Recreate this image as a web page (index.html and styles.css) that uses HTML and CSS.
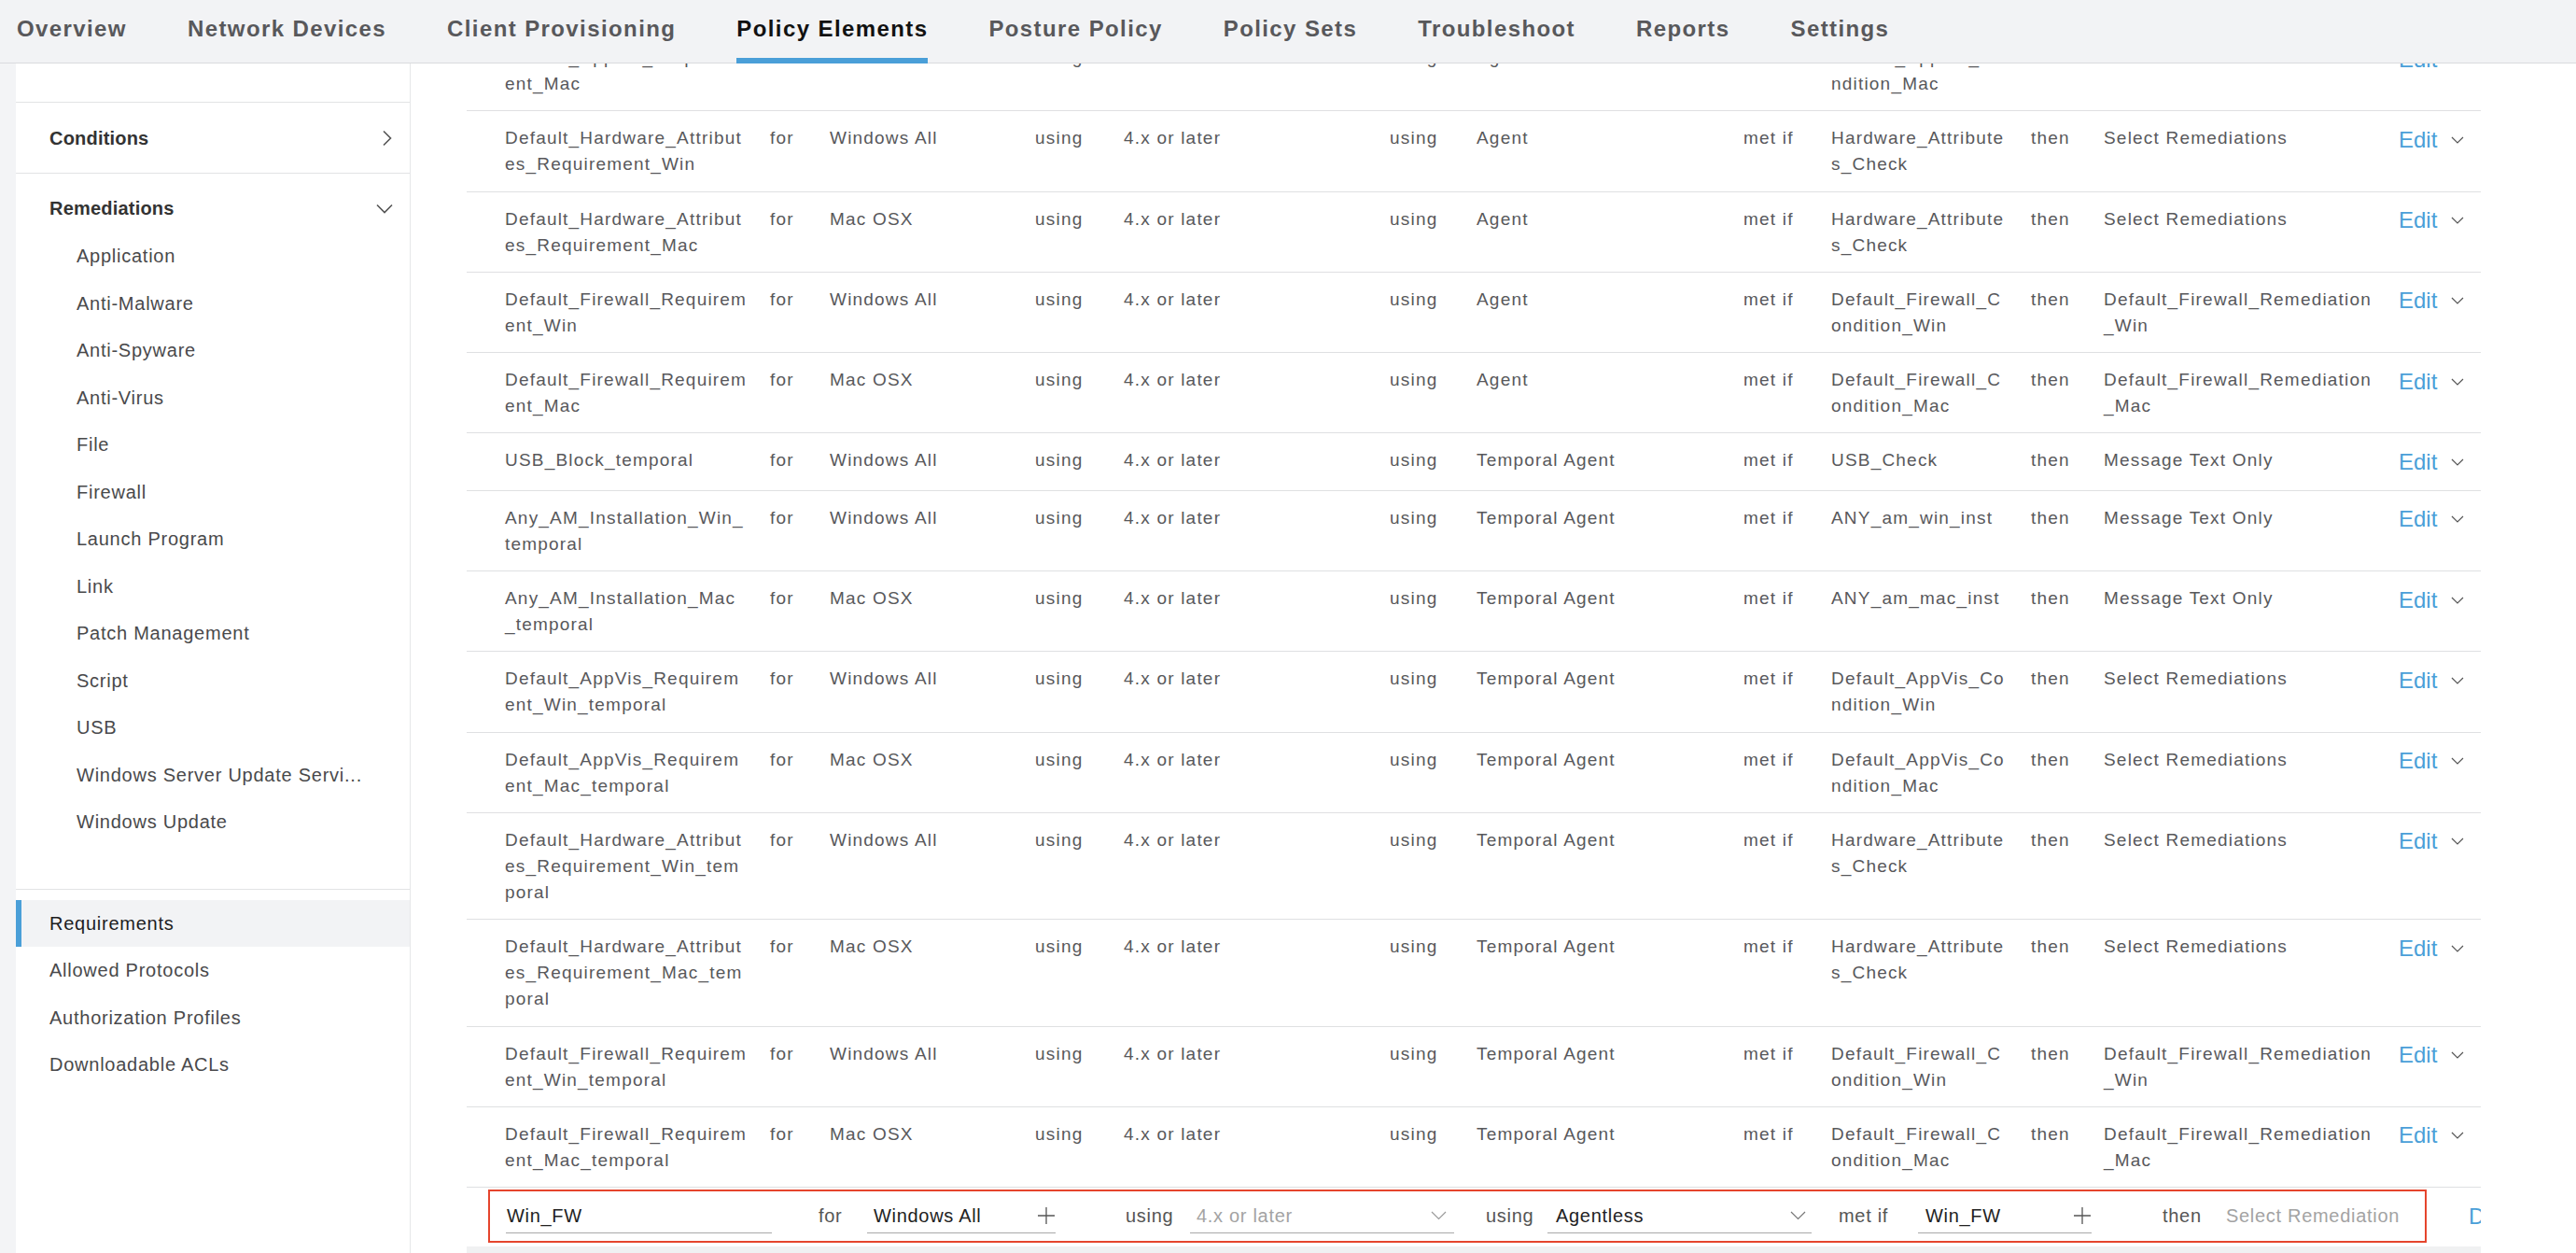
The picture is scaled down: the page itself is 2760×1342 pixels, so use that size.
FILE: index.html
```html
<!DOCTYPE html>
<html lang="en">
<head>
<meta charset="utf-8">
<title>Policy Elements - Requirements</title>
<link rel="stylesheet" href="styles.css">
</head>
<body>
<nav class="topnav">
  <a class="nav-item">Overview</a>
  <a class="nav-item">Network Devices</a>
  <a class="nav-item">Client Provisioning</a>
  <a class="nav-item active">Policy Elements</a>
  <a class="nav-item">Posture Policy</a>
  <a class="nav-item">Policy Sets</a>
  <a class="nav-item">Troubleshoot</a>
  <a class="nav-item">Reports</a>
  <a class="nav-item">Settings</a>
</nav>
<div class="layout">
  <aside class="sidebar">
    <div class="side-top"></div>
    <div class="side-section cond">
      <div class="side-head"><span>Conditions</span>
        <svg class="chev-right" width="12" height="18" viewBox="0 0 12 18"><path d="M2 1.5 L9.5 9 L2 16.5" fill="none" stroke="#555" stroke-width="1.6"/></svg>
      </div>
    </div>
    <div class="side-section rem">
      <div class="side-head"><span>Remediations</span>
        <svg class="chev-down" width="18" height="11" viewBox="0 0 18 11"><path d="M1 1.5 L9 9.5 L17 1.5" fill="none" stroke="#555" stroke-width="1.6"/></svg>
      </div>
      <ul class="side-sub">
        <li>Application</li>
        <li>Anti-Malware</li>
        <li>Anti-Spyware</li>
        <li>Anti-Virus</li>
        <li>File</li>
        <li>Firewall</li>
        <li>Launch Program</li>
        <li>Link</li>
        <li>Patch Management</li>
        <li>Script</li>
        <li>USB</li>
        <li>Windows Server Update Servi...</li>
        <li>Windows Update</li>
      </ul>
    </div>
    <ul class="side-main">
      <li class="active">Requirements</li>
      <li>Allowed Protocols</li>
      <li>Authorization Profiles</li>
      <li>Downloadable ACLs</li>
    </ul>
  </aside>
  <main class="content">
    <div class="table">
      <div class="row"><div>Default_AppVis_Requirem<br>ent_Mac</div><div>for</div><div>Mac OSX</div><div>using</div><div>4.x or later</div><div>using</div><div>Agent</div><div>met if</div><div>Default_AppVis_Co<br>ndition_Mac</div><div>then</div><div>Select Remediations</div><div class="edit"><span>Edit</span><svg width="14" height="8" viewBox="0 0 14 8"><path d="M1 1 L7 7 L13 1" fill="none" stroke="#555" stroke-width="1.2"/></svg></div></div>
      <div class="row"><div>Default_Hardware_Attribut<br>es_Requirement_Win</div><div>for</div><div>Windows All</div><div>using</div><div>4.x or later</div><div>using</div><div>Agent</div><div>met if</div><div>Hardware_Attribute<br>s_Check</div><div>then</div><div>Select Remediations</div><div class="edit"><span>Edit</span><svg width="14" height="8" viewBox="0 0 14 8"><path d="M1 1 L7 7 L13 1" fill="none" stroke="#555" stroke-width="1.2"/></svg></div></div>
      <div class="row"><div>Default_Hardware_Attribut<br>es_Requirement_Mac</div><div>for</div><div>Mac OSX</div><div>using</div><div>4.x or later</div><div>using</div><div>Agent</div><div>met if</div><div>Hardware_Attribute<br>s_Check</div><div>then</div><div>Select Remediations</div><div class="edit"><span>Edit</span><svg width="14" height="8" viewBox="0 0 14 8"><path d="M1 1 L7 7 L13 1" fill="none" stroke="#555" stroke-width="1.2"/></svg></div></div>
      <div class="row"><div>Default_Firewall_Requirem<br>ent_Win</div><div>for</div><div>Windows All</div><div>using</div><div>4.x or later</div><div>using</div><div>Agent</div><div>met if</div><div>Default_Firewall_C<br>ondition_Win</div><div>then</div><div>Default_Firewall_Remediation<br>_Win</div><div class="edit"><span>Edit</span><svg width="14" height="8" viewBox="0 0 14 8"><path d="M1 1 L7 7 L13 1" fill="none" stroke="#555" stroke-width="1.2"/></svg></div></div>
      <div class="row"><div>Default_Firewall_Requirem<br>ent_Mac</div><div>for</div><div>Mac OSX</div><div>using</div><div>4.x or later</div><div>using</div><div>Agent</div><div>met if</div><div>Default_Firewall_C<br>ondition_Mac</div><div>then</div><div>Default_Firewall_Remediation<br>_Mac</div><div class="edit"><span>Edit</span><svg width="14" height="8" viewBox="0 0 14 8"><path d="M1 1 L7 7 L13 1" fill="none" stroke="#555" stroke-width="1.2"/></svg></div></div>
      <div class="row"><div>USB_Block_temporal</div><div>for</div><div>Windows All</div><div>using</div><div>4.x or later</div><div>using</div><div>Temporal Agent</div><div>met if</div><div>USB_Check</div><div>then</div><div>Message Text Only</div><div class="edit"><span>Edit</span><svg width="14" height="8" viewBox="0 0 14 8"><path d="M1 1 L7 7 L13 1" fill="none" stroke="#555" stroke-width="1.2"/></svg></div></div>
      <div class="row"><div>Any_AM_Installation_Win_<br>temporal</div><div>for</div><div>Windows All</div><div>using</div><div>4.x or later</div><div>using</div><div>Temporal Agent</div><div>met if</div><div>ANY_am_win_inst</div><div>then</div><div>Message Text Only</div><div class="edit"><span>Edit</span><svg width="14" height="8" viewBox="0 0 14 8"><path d="M1 1 L7 7 L13 1" fill="none" stroke="#555" stroke-width="1.2"/></svg></div></div>
      <div class="row"><div>Any_AM_Installation_Mac<br>_temporal</div><div>for</div><div>Mac OSX</div><div>using</div><div>4.x or later</div><div>using</div><div>Temporal Agent</div><div>met if</div><div>ANY_am_mac_inst</div><div>then</div><div>Message Text Only</div><div class="edit"><span>Edit</span><svg width="14" height="8" viewBox="0 0 14 8"><path d="M1 1 L7 7 L13 1" fill="none" stroke="#555" stroke-width="1.2"/></svg></div></div>
      <div class="row"><div>Default_AppVis_Requirem<br>ent_Win_temporal</div><div>for</div><div>Windows All</div><div>using</div><div>4.x or later</div><div>using</div><div>Temporal Agent</div><div>met if</div><div>Default_AppVis_Co<br>ndition_Win</div><div>then</div><div>Select Remediations</div><div class="edit"><span>Edit</span><svg width="14" height="8" viewBox="0 0 14 8"><path d="M1 1 L7 7 L13 1" fill="none" stroke="#555" stroke-width="1.2"/></svg></div></div>
      <div class="row"><div>Default_AppVis_Requirem<br>ent_Mac_temporal</div><div>for</div><div>Mac OSX</div><div>using</div><div>4.x or later</div><div>using</div><div>Temporal Agent</div><div>met if</div><div>Default_AppVis_Co<br>ndition_Mac</div><div>then</div><div>Select Remediations</div><div class="edit"><span>Edit</span><svg width="14" height="8" viewBox="0 0 14 8"><path d="M1 1 L7 7 L13 1" fill="none" stroke="#555" stroke-width="1.2"/></svg></div></div>
      <div class="row"><div>Default_Hardware_Attribut<br>es_Requirement_Win_tem<br>poral</div><div>for</div><div>Windows All</div><div>using</div><div>4.x or later</div><div>using</div><div>Temporal Agent</div><div>met if</div><div>Hardware_Attribute<br>s_Check</div><div>then</div><div>Select Remediations</div><div class="edit"><span>Edit</span><svg width="14" height="8" viewBox="0 0 14 8"><path d="M1 1 L7 7 L13 1" fill="none" stroke="#555" stroke-width="1.2"/></svg></div></div>
      <div class="row"><div>Default_Hardware_Attribut<br>es_Requirement_Mac_tem<br>poral</div><div>for</div><div>Mac OSX</div><div>using</div><div>4.x or later</div><div>using</div><div>Temporal Agent</div><div>met if</div><div>Hardware_Attribute<br>s_Check</div><div>then</div><div>Select Remediations</div><div class="edit"><span>Edit</span><svg width="14" height="8" viewBox="0 0 14 8"><path d="M1 1 L7 7 L13 1" fill="none" stroke="#555" stroke-width="1.2"/></svg></div></div>
      <div class="row"><div>Default_Firewall_Requirem<br>ent_Win_temporal</div><div>for</div><div>Windows All</div><div>using</div><div>4.x or later</div><div>using</div><div>Temporal Agent</div><div>met if</div><div>Default_Firewall_C<br>ondition_Win</div><div>then</div><div>Default_Firewall_Remediation<br>_Win</div><div class="edit"><span>Edit</span><svg width="14" height="8" viewBox="0 0 14 8"><path d="M1 1 L7 7 L13 1" fill="none" stroke="#555" stroke-width="1.2"/></svg></div></div>
      <div class="row"><div>Default_Firewall_Requirem<br>ent_Mac_temporal</div><div>for</div><div>Mac OSX</div><div>using</div><div>4.x or later</div><div>using</div><div>Temporal Agent</div><div>met if</div><div>Default_Firewall_C<br>ondition_Mac</div><div>then</div><div>Default_Firewall_Remediation<br>_Mac</div><div class="edit"><span>Edit</span><svg width="14" height="8" viewBox="0 0 14 8"><path d="M1 1 L7 7 L13 1" fill="none" stroke="#555" stroke-width="1.2"/></svg></div></div>
      <div class="edit-row">
        <div class="edit-box">
          <div class="field f-name">Win_FW</div>
          <div class="lbl l-for">for</div>
          <div class="field f-os"><span>Windows All</span><svg width="20" height="20" viewBox="0 0 20 20"><path d="M10 1 V19 M1 10 H19" stroke="#555" stroke-width="1.3"/></svg></div>
          <div class="lbl l-using">using</div>
          <div class="field f-ver"><span class="ph">4.x or later</span><svg width="17" height="10" viewBox="0 0 17 10"><path d="M1 1 L8.5 8.5 L16 1" fill="none" stroke="#9a9a9a" stroke-width="1.2"/></svg></div>
          <div class="lbl l-using2">using</div>
          <div class="field f-agent"><span>Agentless</span><svg width="17" height="10" viewBox="0 0 17 10"><path d="M1 1 L8.5 8.5 L16 1" fill="none" stroke="#777" stroke-width="1.2"/></svg></div>
          <div class="lbl l-metif">met if</div>
          <div class="field f-cond"><span>Win_FW</span><svg width="20" height="20" viewBox="0 0 20 20"><path d="M10 1 V19 M1 10 H19" stroke="#555" stroke-width="1.3"/></svg></div>
          <div class="lbl l-then">then</div>
          <div class="ph rem-ph">Select Remediation</div>
        </div>
        <a class="done">Done</a>
      </div>
      <div class="table-foot"></div>
    </div>
  </main>
</div>
</body>
</html>
```
FILE: styles.css
```css
* { box-sizing: border-box; }
html, body { margin: 0; padding: 0; }
body {
  width: 2760px;
  height: 1342px;
  overflow: hidden;
  background: #f3f4f6;
  font-family: "Liberation Sans", Arial, Helvetica, sans-serif;
  color: #555;
}

/* ---------- top navigation ---------- */
.topnav {
  display: flex;
  height: 68px;
  padding-left: 18px;
  background: #f2f3f5;
  box-shadow: inset 0 -1px 0 #dadbde;
}
.nav-item {
  display: flex;
  align-items: center;
  padding-bottom: 6px;
  margin-right: 65px;
  font-size: 24px;
  font-weight: 700;
  letter-spacing: 1.4px;
  color: #58585b;
  white-space: nowrap;
}
.nav-item.active {
  color: #111;
  box-shadow: inset 0 -6px 0 #4a9fd8;
}

/* ---------- layout ---------- */
.layout {
  display: flex;
  height: 1274px;
  padding-left: 17px;
}
.sidebar {
  flex: none;
  width: 423px;
  background: #fff;
  border-right: 1px solid #e6e7e9;
  font-size: 20px;
  letter-spacing: 0.75px;
  color: #49494b;
}
.content {
  flex: 1;
  background: #fff;
  overflow: hidden;
  padding-left: 60px;
}

/* ---------- sidebar ---------- */
.side-top {
  height: 42px;
  border-bottom: 1px solid #e2e3e5;
}
.side-section.cond {
  border-bottom: 1px solid #e2e3e5;
}
.side-head {
  display: flex;
  align-items: center;
  justify-content: space-between;
  padding: 0 18px 0 36px;
  height: 26px;
  font-weight: 700;
  letter-spacing: 0.2px;
  color: #333;
}
.cond .side-head {
  margin: 25px 0 24px;
}
.rem .side-head {
  margin: 24px 0 13px;
}
.side-sub, .side-main {
  list-style: none;
  margin: 0;
  padding: 0;
}
.side-sub li {
  height: 50.5px;
  line-height: 50.5px;
  padding-left: 65px;
  white-space: nowrap;
}
.rem {
  padding-bottom: 46px;
  border-bottom: 1px solid #e2e3e5;
}
.side-main {
  padding-top: 11px;
}
.side-main li {
  height: 50.5px;
  line-height: 50.5px;
  padding-left: 36px;
}
.side-main li.active {
  background: #f2f3f5;
  border-left: 6px solid #4a9fd8;
  padding-left: 30px;
  color: #1d1d1f;
}

/* ---------- table ---------- */
.table {
  width: 2158px;
  margin-top: -35px;
}
.row {
  display: grid;
  grid-template-columns: 284px 64px 220px 95px 285px 93px 286px 94px 214px 78px 316px 88px;
  padding: 15px 0 14.3px 41px;
  border-bottom: 1px solid #dfe0e2;
  font-size: 19px;
  letter-spacing: 1.2px;
  line-height: 28px;
  color: #58585b;
  white-space: nowrap;
}
.edit {
  display: flex;
  align-items: center;
  align-self: start;
  height: 31px;
  letter-spacing: 0;
}
.edit span {
  font-size: 24px;
  color: #4a9fd8;
}
.edit svg {
  margin-left: 15px;
}

/* ---------- edit row ---------- */
.edit-row {
  display: flex;
  align-items: center;
  padding: 2px 0 4px 23px;
  width: 2158px;
  overflow: hidden;
  white-space: nowrap;
}
.edit-box {
  flex: none;
  display: grid;
  grid-template-columns: 285px 102px 202px 144px 283px 100px 283px 114px 186px 144px 1fr;
  align-items: center;
  width: 2077px;
  height: 57px;
  padding-left: 17px;
  border: 2px solid #e5452d;
  font-size: 20px;
  letter-spacing: 0.7px;
  color: #555;
}
.field {
  display: flex;
  align-items: center;
  justify-content: space-between;
  height: 37px;
  border-bottom: 1px solid #a9a9a9;
  color: #222;
}
.f-name { padding-left: 1px; }
.f-os { padding-left: 7px; padding-right: 0; }
.f-ver { padding: 0 8px 0 7px; }
.f-agent { padding: 0 6px 0 9px; }
.f-cond { padding-left: 8px; padding-right: 0; }
.l-for { padding-left: 50px; }
.l-using { padding-left: 75px; }
.l-using2 { padding-left: 34px; }
.l-metif { padding-left: 29px; }
.l-then { padding-left: 76px; }
.ph { color: #a3a3a3; }
.done {
  margin-left: 45px;
  font-size: 24px;
  color: #4a9fd8;
}
.table-foot {
  width: 2158px;
  height: 20px;
  background: #f0f1f2;
}
```
